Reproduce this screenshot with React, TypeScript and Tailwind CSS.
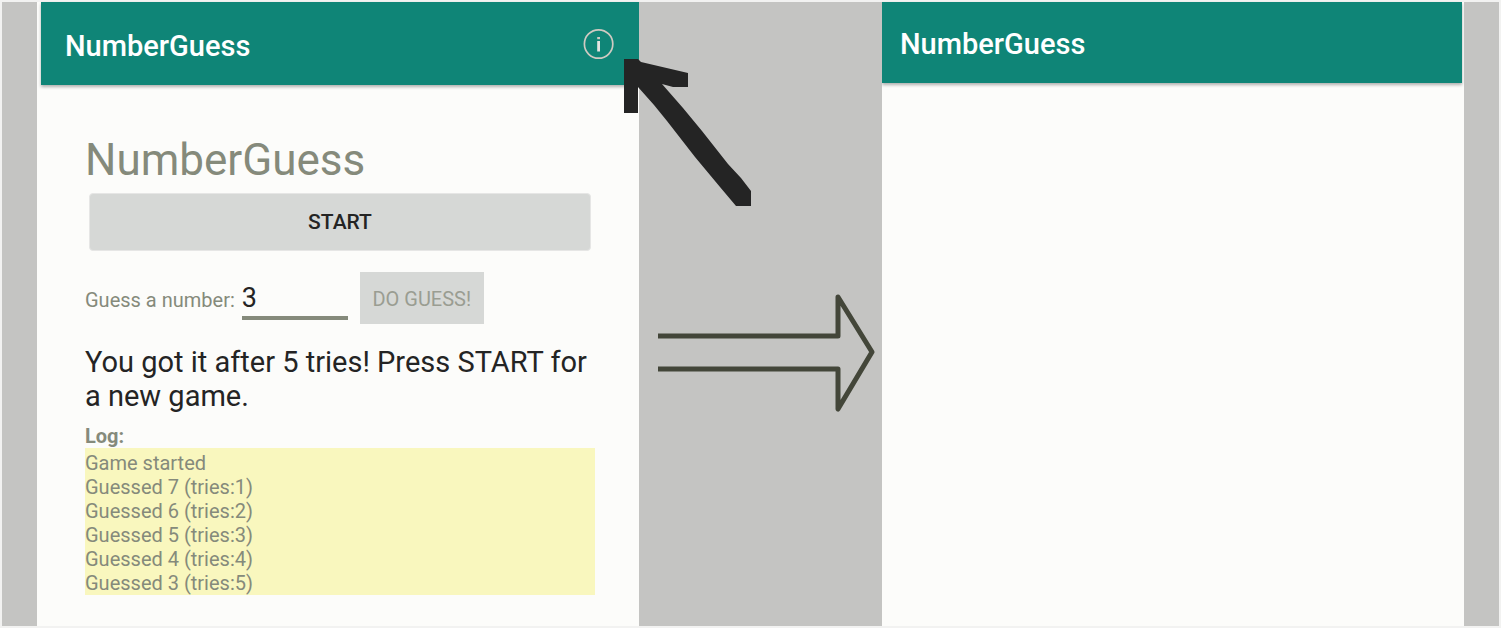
import { useState } from "react";

const LOG = [
  "Game started",
  "Guessed 7 (tries:1)",
  "Guessed 6 (tries:2)",
  "Guessed 5 (tries:3)",
  "Guessed 4 (tries:4)",
  "Guessed 3 (tries:5)",
];

function InfoIcon() {
  return (
    <svg viewBox="0 0 32 32" className="size-8" fill="none" aria-hidden="true">
      <circle cx="15.6" cy="16" r="14.2" stroke="#cfcac2" strokeWidth="1.7" />
      <rect x="14.2" y="9" width="2.8" height="2.2" fill="#cfcac2" />
      <rect x="14.2" y="13" width="2.8" height="10.5" fill="#e4e4e2" />
    </svg>
  );
}

function PointerArrow() {
  return (
    <svg
      viewBox="0 0 128 150"
      className="absolute top-14 -left-4 z-10 h-[150px] w-32"
      fill="#242424"
      aria-hidden="true"
    >
      <path d="M1 1H15L18 4L65 15V29H50L39 26L60 50L79 73L105 106L118 120L128 133V148H113L97 129L72 99L44 63L31 47L15 29V55H1Z" />
    </svg>
  );
}

function HollowArrow() {
  return (
    <svg
      viewBox="0 0 219 120"
      className="h-[120px] w-[219px]"
      fill="none"
      stroke="#434639"
      strokeWidth="5"
      strokeLinejoin="round"
      aria-hidden="true"
    >
      <path d="M1 43H181V4L215 59L181 116V76H1" />
    </svg>
  );
}

export default function App() {
  const [guess, setGuess] = useState("3");
  return (
    <div className="grid min-h-screen grid-cols-[35fr_602fr_243fr_582fr_35fr] bg-[#f2f2f1] p-0.5 font-[Roboto,sans-serif]">
      <div className="bg-[#c4c4c2]" />

      <section className="bg-[#fcfcfa]">
        <header className="ml-1 flex h-[83px] items-center justify-between bg-[#0f8577] pt-1 pr-6 pl-6 text-white shadow-[0_2px_3px_rgba(0,0,0,0.3)]">
          <span className="text-[29px] leading-8 font-medium">NumberGuess</span>
          <button type="button" aria-label="Info" className="pb-1">
            <InfoIcon />
          </button>
        </header>
        <div className="pt-[49px] pr-11 pl-12">
          <h1 className="text-[44px] leading-[52px] text-[#858a7b]">NumberGuess</h1>
          <button
            type="button"
            className="mx-1 mt-[7px] flex h-[58px] w-[calc(100%-8px)] items-center justify-center rounded border border-[#e6e6e5] bg-[#d6d8d6] pt-0.5 text-[21px] font-medium text-[#242424]"
          >
            START
          </button>
          <div className="mt-[21px] flex h-[52px] items-center">
            <label htmlFor="guess" className="pt-1 text-[20px] whitespace-pre text-[#858a7b]">
              Guess a number:
            </label>
            <input
              id="guess"
              value={guess}
              onChange={(e) => setGuess(e.target.value)}
              className="ml-[7px] h-11 w-[106px] border-b-4 border-[#858a7b] bg-transparent pt-1 text-[27px] text-[#242424] outline-none"
            />
            <button
              type="button"
              disabled
              className="ml-3 h-[52px] w-[124px] bg-[#d6d8d6] pt-0.5 text-[20px] whitespace-nowrap text-[#9a9d92]"
            >
              DO GUESS!
            </button>
          </div>
          <p className="mt-[21px] text-[29px] leading-[34px] text-[#242424]">
            You got it after 5 tries! Press START for a new game.
          </p>
          <h2 className="mt-[11px] text-[20px] leading-6 font-bold text-[#858a7b]">Log:</h2>
          <ul className="bg-[#f9f7be] pt-[3px] text-[20px] leading-6 text-[#858a7b]">
            {LOG.map((line) => (
              <li key={line}>{line}</li>
            ))}
          </ul>
        </div>
      </section>

      <div className="relative flex flex-col items-end bg-[#c4c4c2] pt-[291px] pr-1.5">
        <PointerArrow />
        <HollowArrow />
      </div>

      <section className="bg-[#fcfcfa]">
        <header className="mr-0.5 flex h-[81px] items-center bg-[#0f8577] px-[18px] pt-0.5 text-white shadow-[0_2px_3px_rgba(0,0,0,0.3)]">
          <span className="text-[29px] leading-8 font-medium">NumberGuess</span>
        </header>
      </section>

      <div className="bg-[#c4c4c2]" />
    </div>
  );
}
